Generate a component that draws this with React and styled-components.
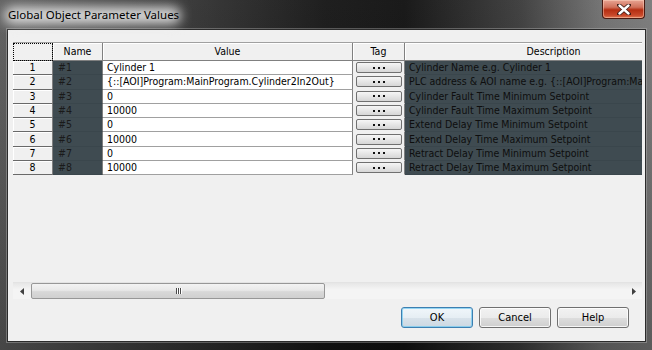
import React from "react";
import styled, { createGlobalStyle } from "styled-components";

const rows = [
  ["#1", "Cylinder 1", "Cylinder Name e.g. Cylinder 1"],
  [
    "#2",
    "{::[AOI]Program:MainProgram.Cylinder2In2Out}",
    "PLC address & AOI name e.g. {::[AOI]Program:MainProgram.Cylinder2In2Out}",
  ],
  ["#3", "0", "Cylinder Fault Time Minimum Setpoint"],
  ["#4", "10000", "Cylinder Fault Time Maximum Setpoint"],
  ["#5", "0", "Extend Delay Time Minimum Setpoint"],
  ["#6", "10000", "Extend Delay Time Maximum Setpoint"],
  ["#7", "0", "Retract Delay Time Minimum Setpoint"],
  ["#8", "10000", "Retract Delay Time Maximum Setpoint"],
];

const GlobalStyle = createGlobalStyle`
  html, body {
    margin: 0;
    padding: 0;
    background: #000;
  }
  body {
    font-family: "DejaVu Sans Condensed", "Liberation Sans", sans-serif;
    font-size: 10.5px;
  }
`;

function App() {
  return (
    <>
      <GlobalStyle />
      <Window>
        <TitleBar>
          <Title>Global Object Parameter Values</Title>
          <CloseButton>
            <svg width="14" height="11" viewBox="0 0 14 11">
              <path
                d="M2 1 L12 10 M12 1 L2 10"
                stroke="#3b1a14"
                strokeWidth="4"
                strokeLinecap="round"
              />
              <path
                d="M2.5 1.5 L11.5 9.5 M11.5 1.5 L2.5 9.5"
                stroke="#fff"
                strokeWidth="2.4"
                strokeLinecap="round"
              />
            </svg>
          </CloseButton>
        </TitleBar>

        <Client>
          <GridView>
            <Viewport>
              <Grid>
                <Corner />
                <HeaderCell>Name</HeaderCell>
                <HeaderCell>Value</HeaderCell>
                <HeaderCell>Tag</HeaderCell>
                <HeaderCell>Description</HeaderCell>
                {rows.map(([name, value, desc], i) => (
                  <React.Fragment key={name}>
                    <RowHeader>{i + 1}</RowHeader>
                    <NameCell>{name}</NameCell>
                    <ValueCell>{value}</ValueCell>
                    <TagCell>
                      <TagButton>
                        <b />
                        <b />
                        <b />
                      </TagButton>
                    </TagCell>
                    <DescCell>{desc}</DescCell>
                  </React.Fragment>
                ))}
              </Grid>
            </Viewport>
            <HScroll>
              <ArrowButton>
                <svg width="4" height="7" viewBox="0 0 4 7">
                  <path d="M4 0 L0 3.5 L4 7 Z" fill="#404040" />
                </svg>
              </ArrowButton>
              <Track>
                <Thumb>
                  <Grip>
                    <i />
                    <i />
                    <i />
                  </Grip>
                </Thumb>
              </Track>
              <ArrowButton>
                <svg width="4" height="7" viewBox="0 0 4 7">
                  <path d="M0 0 L4 3.5 L0 7 Z" fill="#404040" />
                </svg>
              </ArrowButton>
            </HScroll>
          </GridView>

          <ButtonRow>
            <DialogButton $default>OK</DialogButton>
            <DialogButton>Cancel</DialogButton>
            <DialogButton>Help</DialogButton>
          </ButtonRow>
        </Client>
      </Window>
    </>
  );
}

const Window = styled.div`
  width: 652px;
  height: 350px;
  display: flex;
  flex-direction: column;
  box-sizing: border-box;
  padding: 0 6px 8px 7px;
  background: linear-gradient(
      180deg,
      rgba(255, 255, 255, 0.04) 0%,
      rgba(0, 0, 0, 0.25) 100%
    ),
    linear-gradient(
      90deg,
      #5e5e5e 0%,
      #3a3a3a 25%,
      #161616 50%,
      #111 62%,
      #3c3c3c 80%,
      #6f6f6f 92%,
      #7a7a7a 100%
    );
  overflow: hidden;
`;

const TitleBar = styled.div`
  height: 29px;
  display: flex;
  align-items: flex-start;
  flex-shrink: 0;
`;

const Title = styled.span`
  position: relative;
  margin-top: 7px;
  margin-left: 1px;
  font-family: "Noto Sans", "Liberation Sans", sans-serif;
  font-size: 11.5px;
  line-height: 16px;
  color: #000;
  z-index: 0;

  &::before {
    content: "";
    position: absolute;
    left: -4px;
    right: -2px;
    top: 0;
    bottom: -1px;
    background: rgba(235, 235, 235, 0.9);
    filter: blur(6px);
    border-radius: 10px;
    z-index: -1;
  }
`;

const CloseButton = styled.div`
  margin-left: auto;
  margin-right: 1px;
  width: 43px;
  height: 19px;
  box-sizing: border-box;
  display: flex;
  align-items: center;
  justify-content: center;
  border: 1px solid #4a1a12;
  border-top: none;
  border-radius: 0 0 4px 4px;
  background: linear-gradient(
    180deg,
    #e8a493 0%,
    #d0715b 40%,
    #b52e12 55%,
    #c9482a 85%,
    #e07a55 100%
  );
  box-shadow: inset 0 0 0 1px rgba(255, 220, 200, 0.45);
`;

const Client = styled.div`
  flex: 1;
  display: flex;
  flex-direction: column;
  background: #f0f0f0;
  border: 1px solid #2b2b2b;
  box-shadow: 0 0 0 1px rgba(200, 200, 200, 0.35);
  padding: 12px 3px 0 5px;
`;

const GridView = styled.div`
  height: 257px;
  display: flex;
  flex-direction: column;
`;

const Viewport = styled.div`
  flex: 1;
  overflow: hidden;
  background: #f0f0f0;
`;

const Grid = styled.div`
  display: grid;
  width: 690px;
  grid-template-columns: 40px 50px 250px 52px 298px;
  grid-template-rows: 18px repeat(8, 14.3px);
  border-top: 1px solid #a0a0a0;
  color: #000;
  line-height: 13px;
`;

const Cell = styled.div`
  box-sizing: border-box;
  display: flex;
  align-items: center;
  white-space: nowrap;
  overflow: hidden;
`;

const Corner = styled(Cell)`
  background: #f0f0f0;
  border-right: 1px solid #808080;
  border-bottom: 1px solid #808080;
  outline: 1px dotted #000;
  outline-offset: -1px;
`;

const HeaderCell = styled(Cell)`
  justify-content: center;
  background: #f0f0f0;
  border-right: 1px solid #808080;
  border-bottom: 1px solid #808080;
  box-shadow: inset 1px 1px 0 #fff;
`;

const RowHeader = styled(Cell)`
  justify-content: center;
  background: #f0f0f0;
  border-right: 1px solid #808080;
  border-bottom: 1px solid #696969;
  box-shadow: inset 1px 1px 0 #fff;
`;

const NameCell = styled(Cell)`
  padding-left: 5px;
  background: #3f4b51;
  color: #1a1a1a;
  border-right: 1px solid #808080;
  border-bottom: 1px solid #3a464c;
`;

const ValueCell = styled(Cell)`
  padding-left: 4px;
  background: #fff;
  border-right: 1px solid #808080;
  border-bottom: 1px solid #a0a0a0;
`;

const TagCell = styled(Cell)`
  justify-content: center;
  background: #f0f0f0;
  border-right: 1px solid #808080;
  border-bottom: 1px solid #f0f0f0;
`;

const TagButton = styled.div`
  width: 46px;
  height: 11px;
  box-sizing: border-box;
  border: 1px solid #707070;
  border-radius: 2px;
  background: linear-gradient(180deg, #f6f6f6 0%, #e6e6e6 50%, #d6d6d6 100%);
  display: flex;
  align-items: center;
  justify-content: center;
  gap: 3px;

  b {
    display: block;
    width: 2px;
    height: 2px;
    background: #111;
  }
`;

const DescCell = styled(Cell)`
  padding-left: 4px;
  background: #3f4b51;
  color: #0e0e0e;
  border-bottom: 1px solid #3a464c;
`;

const HScroll = styled.div`
  height: 16px;
  display: flex;
  background: linear-gradient(180deg, #e6e6e6 0%, #f4f4f4 40%, #f4f4f4 100%);
  border-top: 1px solid #e3e3e3;
`;

const ArrowButton = styled.div`
  width: 17px;
  display: flex;
  align-items: center;
  justify-content: center;
`;

const Track = styled.div`
  flex: 1;
  display: flex;
  padding: 0 1px;
`;

const Thumb = styled.div`
  width: 294px;
  box-sizing: border-box;
  border: 1px solid #979797;
  border-radius: 2px;
  background: linear-gradient(180deg, #f3f3f3 0%, #e8e8e8 45%, #d8d8d8 55%, #d0d0d0 100%);
  display: flex;
  align-items: center;
  justify-content: center;
`;

const Grip = styled.span`
  display: flex;
  gap: 1px;

  i {
    display: block;
    width: 1px;
    height: 6px;
    background: #4a4a4a;
    box-shadow: 1px 0 0 #fff;
  }
`;

const ButtonRow = styled.div`
  display: flex;
  justify-content: flex-end;
  gap: 6px;
  margin-top: 8px;
  padding-right: 13px;
`;

const DialogButton = styled.button`
  width: 72px;
  height: 21px;
  box-sizing: border-box;
  font-family: "DejaVu Sans Condensed", "Liberation Sans", sans-serif;
  font-size: 11px;
  color: #000;
  padding: 0;
  border-radius: 3px;
  border: 1px solid ${(p) => (p.$default ? "#3c7fb1" : "#707070")};
  background: ${(p) =>
    p.$default
      ? "linear-gradient(180deg, #f0f6fa 0%, #e6eef4 50%, #d8e2ea 52%, #ccd8e2 100%)"
      : "linear-gradient(180deg, #f2f2f2 0%, #ebebeb 50%, #dddddd 52%, #cfcfcf 100%)"};
  box-shadow: inset 0 0 0 1px
    ${(p) => (p.$default ? "rgba(110, 200, 240, 0.7)" : "rgba(255, 255, 255, 0.8)")};
`;

export default App;
